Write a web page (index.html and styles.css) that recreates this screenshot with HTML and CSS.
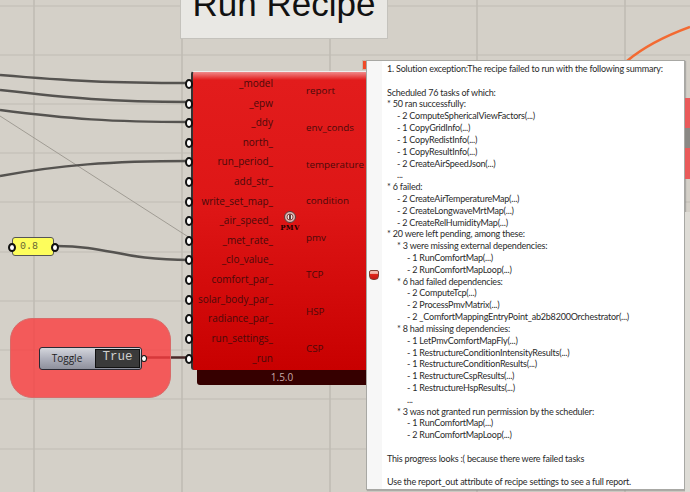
FILE: index.html
```html
<!DOCTYPE html>
<html lang="en">
<head>
  <meta charset="UTF-8" />
  <title>Run Recipe</title>
  <link rel="stylesheet" href="styles.css">
</head>
<body>
  <main class="canvas">
    <svg class="wires" width="690" height="492" viewBox="0 0 690 492">
      <g class="grid">
        <path d="M34 0V492M182 0V492M330 0V492M477 0V492M625 0V492" />
        <path class="faint" d="M0 6H690M0 55H690M0 104H690M0 153H690M0 202H690M0 252H690M0 301H690M0 350H690M0 399H690M0 449H690" />
      </g>
      <path class="thin" d="M0 116L190 238" />
      <path class="wire" d="M0 75C70 81 110 83 190 83" />
      <path class="wire" d="M0 90C70 98 110 102 190 102" />
      <path class="wire" d="M0 110C70 119 110 122 190 122" />
      <path class="wire" d="M0 176C60 165 110 161 190 161" />
      <path class="wire" d="M56 246C110 246 120 260 190 260" />
      <path class="wire dark" d="M145 357.500H190" />
      <path class="orange" d="M627 61C645 46 668 35 690 27" />
      <path class="black" d="M684 245L690 216" />
      <path class="orange" d="M684 301L690 299" />
      <path class="orange" d="M684 482L690 490" />
    </svg>

    <div class="title-box"><span>Run Recipe</span></div>

    <div class="group"></div>

    <div class="slider"><span>0.8</span></div>

    <div class="toggle">
      <span class="toggle-label">Toggle</span>
      <span class="toggle-value">True</span>
    </div>

    <section class="component">
      <div class="component-body">
        <ul class="inputs">
          <li>_model</li>
          <li>_epw</li>
          <li>_ddy</li>
          <li>north_</li>
          <li>run_period_</li>
          <li>add_str_</li>
          <li>write_set_map_</li>
          <li>_air_speed_</li>
          <li>_met_rate_</li>
          <li>_clo_value_</li>
          <li>comfort_par_</li>
          <li>solar_body_par_</li>
          <li>radiance_par_</li>
          <li>run_settings_</li>
          <li>_run</li>
        </ul>
        <div class="badge">
          <svg width="14" height="14" viewBox="0 0 14 14">
            <circle cx="7" cy="7" r="5.500" fill="#d8b4b0" stroke="#5a3a3a" stroke-width="1" />
            <circle cx="7" cy="7" r="3" fill="#f4e8e4" stroke="#7a2020" stroke-width="0.800" />
            <path d="M7 4.500V9.500" stroke="#301010" stroke-width="1.600" />
          </svg>
          <span>PMV</span>
        </div>
        <ul class="outputs">
          <li>report</li>
          <li>env_conds</li>
          <li>temperature</li>
          <li>condition</li>
          <li>pmv</li>
          <li>TCP</li>
          <li>HSP</li>
          <li>CSP</li>
        </ul>
      </div>
      <div class="component-version">1.5.0</div>
    </section>

    <span class="corner-flag"></span>
    <aside class="report">
      <div class="report-strip"><span class="balloon"></span></div>
      <div class="report-text">
        <p>1. Solution exception:The recipe failed to run with the following summary:</p>
        <p class="gap">Scheduled 76 tasks of which:</p>
        <p>* 50 ran successfully:</p>
        <p class="l1">- 2 ComputeSphericalViewFactors(...)</p>
        <p class="l1">- 1 CopyGridInfo(...)</p>
        <p class="l1">- 1 CopyRedistInfo(...)</p>
        <p class="l1">- 1 CopyResultInfo(...)</p>
        <p class="l1">- 2 CreateAirSpeedJson(...)</p>
        <p class="l1">...</p>
        <p>* 6 failed:</p>
        <p class="l1">- 2 CreateAirTemperatureMap(...)</p>
        <p class="l1">- 2 CreateLongwaveMrtMap(...)</p>
        <p class="l1">- 2 CreateRelHumidityMap(...)</p>
        <p>* 20 were left pending, among these:</p>
        <p class="l1">* 3 were missing external dependencies:</p>
        <p class="l2">- 1 RunComfortMap(...)</p>
        <p class="l2">- 2 RunComfortMapLoop(...)</p>
        <p class="l1">* 6 had failed dependencies:</p>
        <p class="l2">- 2 ComputeTcp(...)</p>
        <p class="l2">- 2 ProcessPmvMatrix(...)</p>
        <p class="l2">- 2 _ComfortMappingEntryPoint_ab2b8200Orchestrator(...)</p>
        <p class="l1">* 8 had missing dependencies:</p>
        <p class="l2">- 1 LetPmvComfortMapFly(...)</p>
        <p class="l2">- 1 RestructureConditionIntensityResults(...)</p>
        <p class="l2">- 1 RestructureConditionResults(...)</p>
        <p class="l2">- 1 RestructureCspResults(...)</p>
        <p class="l2">- 1 RestructureHspResults(...)</p>
        <p class="l2">...</p>
        <p class="l1">* 3 was not granted run permission by the scheduler:</p>
        <p class="l2">- 1 RunComfortMap(...)</p>
        <p class="l2">- 2 RunComfortMapLoop(...)</p>
        <p class="gap">This progress looks :( because there were failed tasks</p>
        <p class="gap">Use the report_out attribute of recipe settings to see a full report.</p>
      </div>
    </aside>

    <div class="edge edge-red-a"></div>
    <div class="edge edge-gray"></div>
    <div class="edge edge-red-b"></div>
    <div class="edge edge-panel"></div>
  </main>
</body>
</html>
```

FILE: styles.css
```css
html, body { margin: 0; padding: 0; overflow: hidden; }
body { width: 690px; height: 492px; font-family: 'Open Sans', 'Liberation Sans', sans-serif; color: #222; }
ul { list-style: none; margin: 0; padding: 0; }

/* the canvas is a free diagram, nodes sit where they were placed */
.canvas { position: relative; width: 690px; height: 492px; background: #d4d0c8; overflow: hidden; }
.wires { position: absolute; left: 0; top: 0; }
.grid path { fill: none; stroke: #b4b0a8; stroke-width: 1; }
.grid .faint { stroke: #c0bcb4; }
.wire { fill: none; stroke: #555350; stroke-width: 2.500; }
.wire.dark { stroke: #4a2a2a; }
.thin { fill: none; stroke: #a09c94; stroke-width: 1; }
.orange { fill: none; stroke: #f36a32; stroke-width: 2.500; }
.black { fill: none; stroke: #000; stroke-width: 3; }

.title-box { position: absolute; left: 180px; top: 0; width: 208px; height: 39px; background: #e9e8e4; border: 1px solid #c4c2bc; border-top: 0; box-sizing: border-box; text-align: center; }
.title-box span { display: block; font-family: 'Liberation Sans', Arial, sans-serif; font-size: 35px; line-height: 36px; margin-top: -14px; color: #111; white-space: nowrap; }

.group { position: absolute; left: 10px; top: 318px; width: 161px; height: 80px; background: rgba(250, 60, 62, 0.8); border: 1px solid #d86a68; box-sizing: border-box; border-radius: 22px; }

.slider { position: absolute; left: 12px; top: 237px; width: 42px; height: 19px; box-sizing: border-box; background: #fdfd5c; border: 1px solid #555; border-radius: 3px; font-family: 'Liberation Mono', monospace; font-size: 10px; line-height: 17px; color: #666633; padding-left: 7px; }
.slider::before, .slider::after { content: ""; position: absolute; top: 5px; width: 4px; height: 5px; background: #fff; border: 2px solid #111; border-radius: 50%; }
.slider::before { left: -5px; }
.slider::after { right: -6px; }

.toggle { position: absolute; left: 39px; top: 347px; width: 103px; height: 23px; box-sizing: border-box; display: flex; align-items: stretch; border: 1px solid #2a2a34; border-radius: 3px; background: linear-gradient(#d4d6dc, #aeb0bc 50%, #8e909c); }
.toggle::after { content: ""; position: absolute; right: -6px; top: 7px; width: 4px; height: 5px; background: #fff; border: 1px solid #111; border-radius: 50%; }
.toggle-label { width: 54px; font-size: 10px; line-height: 21px; text-align: center; color: #222; }
.toggle-value { flex: 1; margin: 1px; background: #3a3a3a; border: 1px solid #111; font-family: 'Liberation Mono', monospace; font-size: 12.500px; line-height: 15px; text-align: center; color: #cfcfcf; }

.component { position: absolute; left: 191px; top: 71px; width: 176px; }
.component-body { position: relative; display: flex; height: 299px; box-sizing: border-box; border-left: 2px solid #333; border-top: 1px solid #eee; border-radius: 3px 0 0 3px; background: linear-gradient(#f08a8a, #e21c1c 8px, #de1616 45%, #c80000); }
.component-version { margin-left: 6px; height: 15px; background: #360000; border-radius: 0 0 0 3px; font-size: 10px; line-height: 15px; text-align: center; color: #c8a8a8; }

.inputs { width: 80px; flex: none; padding-top: 2px; }
.inputs li { position: relative; height: 19.620px; line-height: 19.620px; font-size: 10px; text-align: right; color: #4a0a0a; white-space: nowrap; }
.inputs li::before { content: ""; position: absolute; left: -8px; top: 5px; width: 4px; height: 6px; background: #fff; border: 2px solid #111; border-radius: 50%; }

.badge { position: absolute; left: 86px; top: 138px; width: 22px; display: flex; flex-direction: column; align-items: center; }
.badge svg { display: block; }
.badge span { font-family: 'DejaVu Serif', serif; font-weight: bold; font-size: 7px; line-height: 7px; letter-spacing: 0.400px; color: #200; }

.outputs { margin-left: 33px; padding-top: 1px; flex: 1; }
.outputs li { height: 36.800px; line-height: 36.800px; font-size: 9.800px; color: #4a0a0a; white-space: nowrap; }

.corner-flag { position: absolute; left: 362px; top: 60px; width: 5px; height: 10px; background: #f04a28; border: 1px solid #c8b8a8; box-sizing: border-box; }

.report { position: absolute; left: 366px; top: 60px; width: 319px; height: 430px; display: flex; background: #fff; border: 1px solid #a8a8a4; box-sizing: border-box; box-shadow: 1px 1px 1px #8888; }
.report-strip { position: relative; width: 15px; flex: none; background: #f7f7f7; }
.balloon { position: absolute; left: 2px; top: 209px; width: 10px; height: 10px; background: linear-gradient(#f4b8a8 30%, #e02818 40%, #c81810); border: 1px solid #804030; box-sizing: border-box; border-radius: 2px 2px 4px 4px; }
.report-text { padding: 2px 0 0 5px; font-family: Lato, 'Liberation Sans', sans-serif; font-size: 9px; letter-spacing: -0.200px; line-height: 11.820px; color: #2a2a2a; white-space: nowrap; }
.report-text p { margin: 0; }
.report-text .gap { margin-top: 11.820px; }
.report-text .l1 { padding-left: 10px; }
.report-text .l2 { padding-left: 20px; }

.edge { position: absolute; left: 685px; width: 5px; }
.edge-red-a { top: 98px; height: 30px; background: #ea5a5a; }
.edge-gray { top: 128px; height: 20px; background: #8a8884; }
.edge-red-b { top: 148px; height: 31px; background: #ea5a5a; }
.edge-panel { top: 212px; height: 280px; background: #dedcd6; z-index: 0; }
```
